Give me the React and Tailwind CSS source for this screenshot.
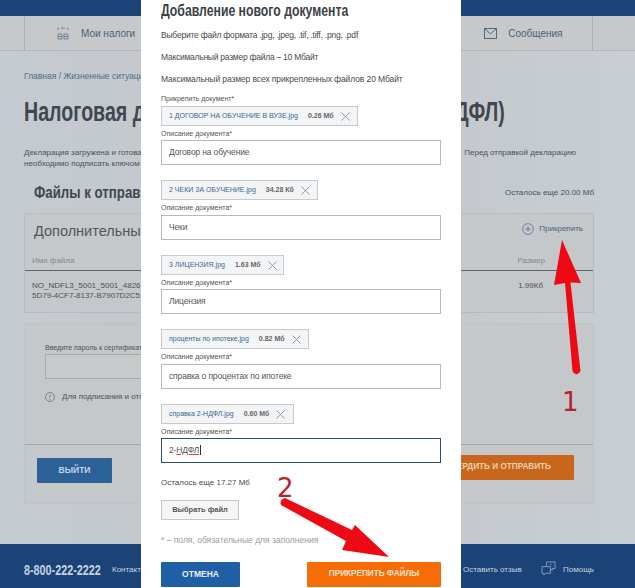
const Cross = () => (
  <svg width="9" height="9" viewBox="0 0 9 9" className="shrink-0" fill="none" stroke="#7d96ae" strokeWidth="0.9">
    <path d="M0.5 0.5L8.5 8.5M8.5 0.5L0.5 8.5" />
  </svg>
);

const sans = "font-['Liberation_Sans',Arial,sans-serif]";
const squeeze = "inline-block whitespace-nowrap origin-left scale-x-[0.7]";

function FileBlock({ chip, size, gap, w, desc, labelGap = "mt-[2px]", focused, first }) {
  return (
    <div className={first ? "" : "mt-[15px]"}>
      <div style={{ width: w }} className="h-[20px] flex items-center border border-[#c6cacd] bg-[#f2f4f6] pl-[7px]">
        <span className="text-[7px] text-[#3a6694] whitespace-nowrap">{chip}</span>
        <span style={{ marginLeft: gap }} className="text-[7px] font-bold text-[#666] whitespace-nowrap">{size}</span>
        <span className="ml-[7px] flex"><Cross /></span>
      </div>
      <div className="text-[7px] leading-[8px] mt-[4px] text-[#555]">Описание документа*</div>
      <div className={labelGap + " w-[280px] h-[25px] flex items-center pl-[7px] text-[8.5px] tracking-[-0.15px] text-[#555] bg-white border " + (focused ? "border-[#2b4e6c]" : "border-[#b9b9b9]")}>
        {focused ? <span>2-<span className="underline decoration-[#c44]">НДФЛ</span><span className="border-l border-[#333] ml-px" /></span> : desc}
      </div>
    </div>
  );
}

export default function App() {
  return (
    <div className={"relative w-[635px] h-[588px] overflow-hidden bg-gradient-to-r from-[#c4cbd1] via-[#c2c5c9] to-[#c8ced4] text-[#4b5158] " + sans}>
      <div className="h-[16px] bg-[#1c4378]" />
      <div className="h-[35px] bg-[#c6c8ca] border-b border-[#b4b6b8] flex items-stretch">
        <div className="ml-[24px] w-[569px] border-x border-[#aeb1b4] flex items-center">
          <svg className="ml-[32px]" width="12" height="13" viewBox="0 0 12 13" fill="none" stroke="#6d8296" strokeWidth="1">
            <path d="M4 1H8M1 3V1H2M10 1H11V3M1 7H5V12H1ZM7 7H11V12H7ZM1 9.5H5M7 9.5H11" />
          </svg>
          <span className="ml-[12px] text-[10px] text-[#4b6178]">Мои налоги</span>
          <svg className="ml-[349px]" width="13" height="11" viewBox="0 0 13 11" fill="none" stroke="#4d6b89" strokeWidth="1">
            <rect x="0.5" y="0.5" width="12" height="10" />
            <path d="M1 1L6.5 6L12 1" />
          </svg>
          <span className="ml-[11px] text-[10px] text-[#4b6178]">Сообщения</span>
        </div>
      </div>

      <div className="pl-[24px] w-[594px]">
        <div className="mt-[20px] text-[8.5px] leading-[10px] text-[#4f6b86]">Главная / Жизненные ситуации</div>
        <h1 className="mt-[15px] w-[481px] h-[32px] text-[28px] leading-[32px] font-bold text-[#41474e] flex justify-between">
          <span className={squeeze}>Налоговая декларация</span>
          <span className="inline-block whitespace-nowrap origin-right scale-x-[0.7]">(3-НДФЛ)</span>
        </h1>
        <div className="mt-[19px] text-[8px] leading-[11px] text-[#4b5158] flex justify-between">
          <span>Декларация загружена и готова<br />необходимо подписать ключом</span>
          <span className="mr-[18px]">Перед отправкой декларацию</span>
        </div>
        <div className="mt-[14px] pl-[10px] flex items-center justify-between h-[20px]">
          <span className="text-[17px] font-bold text-[#41474e] inline-block whitespace-nowrap origin-left scale-x-[0.78]">Файлы к отправке</span>
          <span className="text-[8px] text-[#4b5158]">Осталось еще 20.00 Мб</span>
        </div>
        <div className="mt-[10px] h-[100px] border border-[#b9bcbf] bg-[#c5c8cb]">
          <div className="pl-[9px] pr-[10px] pt-[8px] h-[34px] flex items-start justify-between">
            <span className="text-[14.5px] leading-[18px] text-[#50565c]">Дополнительные</span>
            <span className="flex items-center gap-[5px] mt-[1px]">
              <svg width="12" height="12" viewBox="0 0 13 13" fill="none" stroke="#4d6b89" strokeWidth="0.8">
                <circle cx="6.5" cy="6.5" r="5.8" />
                <path d="M6.5 3.5V9.5M3.5 6.5H9.5" />
              </svg>
              <span className="text-[8px] text-[#4d6178]">Прикрепить</span>
            </span>
          </div>
          <div className="h-[23px] pl-[7px] pr-[48px] pb-[3px] flex items-end justify-between border-b border-[#5d6670] text-[8px] text-[#83888d]">
            <span>Имя файла</span><span>Размер</span>
          </div>
          <div className="pl-[7px] pr-[50px] pt-[10px] flex justify-between text-[8px] leading-[10px] text-[#4b5158]">
            <span>NO_NDFL3_5001_5001_4826<br />5D79-4CF7-8137-B7907D2C5</span><span>1.99Кб</span>
          </div>
        </div>
        <div className="mt-[10px] h-[181px] border border-[#c0c3c6] bg-[#c5c8cb] flex flex-col">
          <div className="h-[121px] pl-[20px] pt-[20px] border-b border-[#a5a8ab]">
            <div className="text-[7px] leading-[8px] text-[#4b5158]">Введите пароль к сертификату</div>
            <div className="mt-[2px] w-[300px] h-[25px] border border-[#a9abad] bg-[#c8c9cb]" />
            <div className="mt-[12px] flex items-center gap-[7px] text-[8px] text-[#4b5158]">
              <svg width="10" height="10" viewBox="0 0 10 10" fill="none" stroke="#5d7489" strokeWidth="0.8">
                <circle cx="5" cy="5" r="4.5" />
                <path d="M5 2.5V5.5M5 6.8V7.8" />
              </svg>
              <span>Для подписания и отправки</span>
            </div>
          </div>
          <div className="flex justify-between pl-[12px] pr-[19px]">
            <div className="mt-[13px] w-[75px] h-[25px] bg-[#2c6198] rounded-[1px] flex items-center justify-center text-[8.5px] font-bold text-[#c0d4e8]">ВЫЙТИ</div>
            <div className="mt-[10px] w-[200px] h-[25px] bg-[#c8671c] rounded-[1px] flex items-center justify-end pr-[23px] text-[8.2px] font-bold text-[#eccfae]">ПОДТВЕРДИТЬ И ОТПРАВИТЬ</div>
          </div>
        </div>
      </div>

      <div className="mt-[40px] h-[44px] bg-[#1c4378] flex items-center pl-[24px] pt-[8px] text-[8px] text-[#c5d2e0]">
        <span className="w-[88px] flex">
          <span className="text-[15px] font-bold inline-block whitespace-nowrap origin-left scale-x-[0.72]">8-800-222-2222</span>
        </span>
        <span className="w-[351px]">Контакты</span>
        <span className="w-[78px]">Оставить отзыв</span>
        <svg className="mt-[-4px]" width="15" height="15" viewBox="0 0 16 16" fill="none" stroke="#8fa8c4" strokeWidth="0.9">
          <path d="M6 6V1H15V8H12V10L10 8" />
          <path d="M10 6H1V13H3V15L5 13H10Z" />
          <path d="M10.5 2.5V5" />
        </svg>
        <span className="ml-[7px]">Помощь</span>
      </div>

      <div className="absolute left-[141px] top-0 w-[320px] h-[588px] bg-white px-[20px] text-[#4a4a4a]">
        <div className="mt-[1px] h-[20px] text-[17px] leading-[20px] font-bold text-[#3c4248] block whitespace-nowrap origin-left scale-x-[0.72]">Добавление нового документа</div>
        <div className="mt-[9px] text-[8.5px] leading-[10px] tracking-[-0.22px]">Выберите файл формата .jpg, .jpeg, .tif, .tiff, .png, .pdf</div>
        <div className="mt-[12px] text-[8.5px] leading-[10px] tracking-[-0.25px]">Максимальный размер файла – 10 Мбайт</div>
        <div className="mt-[12px] text-[8.5px] leading-[10px] tracking-[-0.1px]">Максимальный размер всех прикрепленных файлов 20 Мбайт</div>
        <div className="mt-[11px] mb-[3px] text-[7px] leading-[8px] text-[#555]">Прикрепить документ*</div>
        <FileBlock first chip="1 ДОГОВОР НА ОБУЧЕНИЕ В ВУЗЕ.jpg" size="0.26 Мб" gap="10px" w="197px" desc="Договор на обучение" />
        <FileBlock chip="2 ЧЕКИ ЗА ОБУЧЕНИЕ.jpg" size="34.28 Кб" gap="10px" w="157px" labelGap="mt-[3px]" desc="Чеки" />
        <FileBlock chip="3 ЛИЦЕНЗИЯ.jpg" size="1.63 Мб" gap="10px" w="123px" desc="Лицензия" />
        <FileBlock chip="проценты по ипотеке.jpg" size="0.82 Мб" gap="10px" w="148px" labelGap="mt-[3px]" desc="справка о процентах по ипотеке" />
        <FileBlock chip="справка 2-НДФЛ.jpg" size="0.60 Мб" gap="10px" w="133px" focused />
        <div className="mt-[15px] text-[8px] leading-[10px]">Осталось еще 17.27 Мб</div>
        <div className="mt-[12px] w-[78px] h-[20px] border border-[#c6c6c6] bg-[#f5f5f5] flex items-center justify-center text-[7.5px] font-bold text-[#555]">Выбрать файл</div>
        <div className="mt-[15px] text-[8.5px] leading-[10px] text-[#9a9a9a]">* – поля, обязательные для заполнения</div>
        <div className="mt-[17px] flex justify-between">
          <div className="w-[79px] h-[25px] bg-[#1f5fa5] rounded-[1px] flex items-center justify-center text-[8.5px] font-bold text-[#e6eef7]">ОТМЕНА</div>
          <div className="w-[134px] h-[25px] bg-[#f66c07] rounded-[1px] flex items-center justify-center text-[8.2px] font-bold text-[#fbe3cc]">ПРИКРЕПИТЬ ФАЙЛЫ</div>
        </div>
      </div>

      <svg className="absolute left-0 top-0 pointer-events-none" width="635" height="588" viewBox="0 0 635 588">
        <path d="M562 240L581 283L570.5 282.5L580.5 371Q579 374 576.5 374.5Q573.5 374 572.5 371L565 283L554 285Z" fill="#ee0a14" />
        <path d="M285 498L352 530L355 525L389 557L342 550L346 541L281 505Q279 500 285 498Z" fill="#ee0a14" />
      </svg>
      <span className="absolute left-[562px] top-[388px] text-[26px] leading-[28px] text-[#b8232a] font-['DejaVu_Sans',sans-serif]">1</span>
      <span className="absolute left-[277px] top-[474px] text-[26px] leading-[28px] text-[#b8232a] font-['DejaVu_Sans',sans-serif]">2</span>
    </div>
  );
}
